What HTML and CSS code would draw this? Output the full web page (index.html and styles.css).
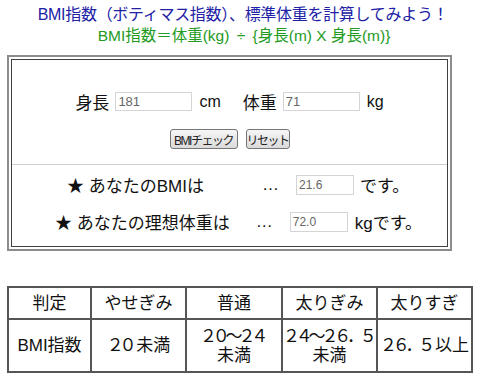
FILE: index.html
```html
<!DOCTYPE html>
<html lang="ja">

<head>
    <meta charset="utf-8">
    <meta name="viewport" content="width=device-width, initial-scale=1.0">
    <title>BMI指数</title>
    <link rel="stylesheet" href="styles.css">
</head>

<body>
    <div class="title">
        <h1>BMI指数（ボティマス指数）、標準体重を計算してみよう！</h1>
        <p class="formula">BMI指数＝体重(kg) <span class="div">÷</span> {身長(m) X 身長(m)}</p>
    </div>

    <div class="calc">
        <div class="calc_inner">
            <div class="calc_input">
                <div class="input_row">
                    <span class="lbl">身長</span>
                    <input type="text" class="num" value="181">
                    <span class="unit">cm</span>
                    <span class="lbl lbl_weight">体重</span>
                    <input type="text" class="num" value="71">
                    <span class="unit">kg</span>
                </div>
                <div class="btn_row">
                    <button class="btn btn_check">BMIチェック</button>
                    <button class="btn btn_reset">リセット</button>
                </div>
            </div>

            <div class="calc_result">
                <div class="res_row res_bmi">
                    <span class="res_lbl">★ あなたのBMIは</span>
                    <span class="dots">…</span>
                    <input type="text" class="res" value="21.6">
                    <span class="res_unit">です。</span>
                </div>
                <div class="res_row res_weight">
                    <span class="res_lbl">★ あなたの理想体重は</span>
                    <span class="dots">…</span>
                    <input type="text" class="res" value="72.0">
                    <span class="res_unit">kgです。</span>
                </div>
            </div>
        </div>
    </div>

    <table class="judge">
        <colgroup>
            <col class="c1">
            <col class="c2">
            <col class="c3">
            <col class="c4">
            <col class="c5">
        </colgroup>
        <tr class="judge_head">
            <td>判定</td>
            <td>やせぎみ</td>
            <td>普通</td>
            <td>太りぎみ</td>
            <td>太りすぎ</td>
        </tr>
        <tr class="judge_body">
            <td>BMI指数</td>
            <td><span class="fw">２０</span>未満</td>
            <td><span class="fw">２０～２４</span><br>未満</td>
            <td><span class="fw">２４～２６．５</span><br>未満</td>
            <td><span class="fw">２６．５</span>以上</td>
        </tr>
    </table>
</body>

</html>
```

FILE: styles.css
```css
body {
    margin: 0;
    padding: 5px 7px 0;
    font-family: "Liberation Sans", "Noto Sans CJK JP", sans-serif;
    color: #111;
    background-color: #fff;
}

/* --------- TITLE --------------- */
.title h1 {
    margin: 0;
    font-size: 16px;
    line-height: 20px;
    font-weight: normal;
    text-align: center;
    color: #2121a6;
    letter-spacing: -0.3px;
    padding-left: 6px;
}

.formula {
    margin: 0;
    font-size: 15.5px;
    line-height: 22px;
    text-align: center;
    color: #239b23;
    padding-left: 8px;
}

.formula .div {
    margin: 0 3px;
}

/* --------- CALC BOX --------------- */
.calc {
    width: 445px;
    box-sizing: border-box;
    margin-top: 8px;
    border: 2px solid #8c8c8c;
    padding: 2px;
}

.calc_inner {
    border: 1px solid #404040;
}

.calc_input {
    padding: 31px 0 15px;
    border-bottom: 1px solid #cfcfcf;
}

.input_row {
    display: flex;
    justify-content: center;
    align-items: center;
    height: 21px;
    font-size: 16px;
}

.lbl {
    margin-right: 6px;
    font-size: 17px;
}

.lbl_weight {
    margin-left: 22px;
}

.unit {
    margin-left: 7px;
}

input {
    box-sizing: border-box;
    height: 19px;
    border: 1px solid #d4d4d4;
    padding: 0 2px;
    font-family: "Liberation Sans", sans-serif;
    color: #666;
    background-color: #fff;
}

.num {
    width: 77px;
    font-size: 13px;
}

.btn_row {
    display: flex;
    justify-content: center;
    gap: 8px;
    margin-top: 17px;
}

.btn {
    height: 20px;
    padding: 0;
    font-family: "Liberation Sans", "Noto Sans CJK JP", sans-serif;
    font-size: 12px;
    letter-spacing: -1.5px;
    white-space: nowrap;
    color: #222;
    border: 1px solid #767676;
    border-radius: 3px;
    background: linear-gradient(#f6f6f6, #dadada);
}

.btn_check {
    width: 68px;
}

.btn_reset {
    width: 44px;
}

/* --------- RESULT --------------- */
.calc_result {
    display: flex;
    flex-direction: column;
    gap: 14px;
    padding: 8px 0 13px;
}

.res_row {
    display: flex;
    align-items: center;
    height: 23px;
    font-size: 17px;
}

.res {
    width: 58px;
    height: 20px;
    font-size: 12px;
}

.res_bmi {
    padding-left: 55px;
}

.res_bmi .res_lbl {
    margin-right: 58px;
}

.res_bmi .dots {
    margin-right: 17px;
}

.res_bmi .res {
    margin-right: 6px;
}

.res_weight {
    padding-left: 43px;
}

.res_weight .res_lbl {
    margin-right: 26px;
}

.res_weight .dots {
    margin-right: 17px;
}

.res_weight .res {
    margin-right: 7px;
}

/* --------- TABLE --------------- */
.judge {
    width: 466px;
    margin-top: 35px;
    table-layout: fixed;
    border-collapse: collapse;
    border: 2px solid #555;
}

.judge td {
    border: 2px solid #555;
    padding: 0;
    text-align: center;
    font-size: 17px;
    line-height: 19px;
    white-space: nowrap;
}

.judge .fw {
    letter-spacing: -4.2px;
    margin-right: 4px;
}

.c1 {
    width: 83px;
}

.c2 {
    width: 95px;
}

.c3 {
    width: 96px;
}

.c4 {
    width: 95px;
}

.judge_head td {
    height: 30px;
}

.judge_body td {
    height: 51px;
}
```
